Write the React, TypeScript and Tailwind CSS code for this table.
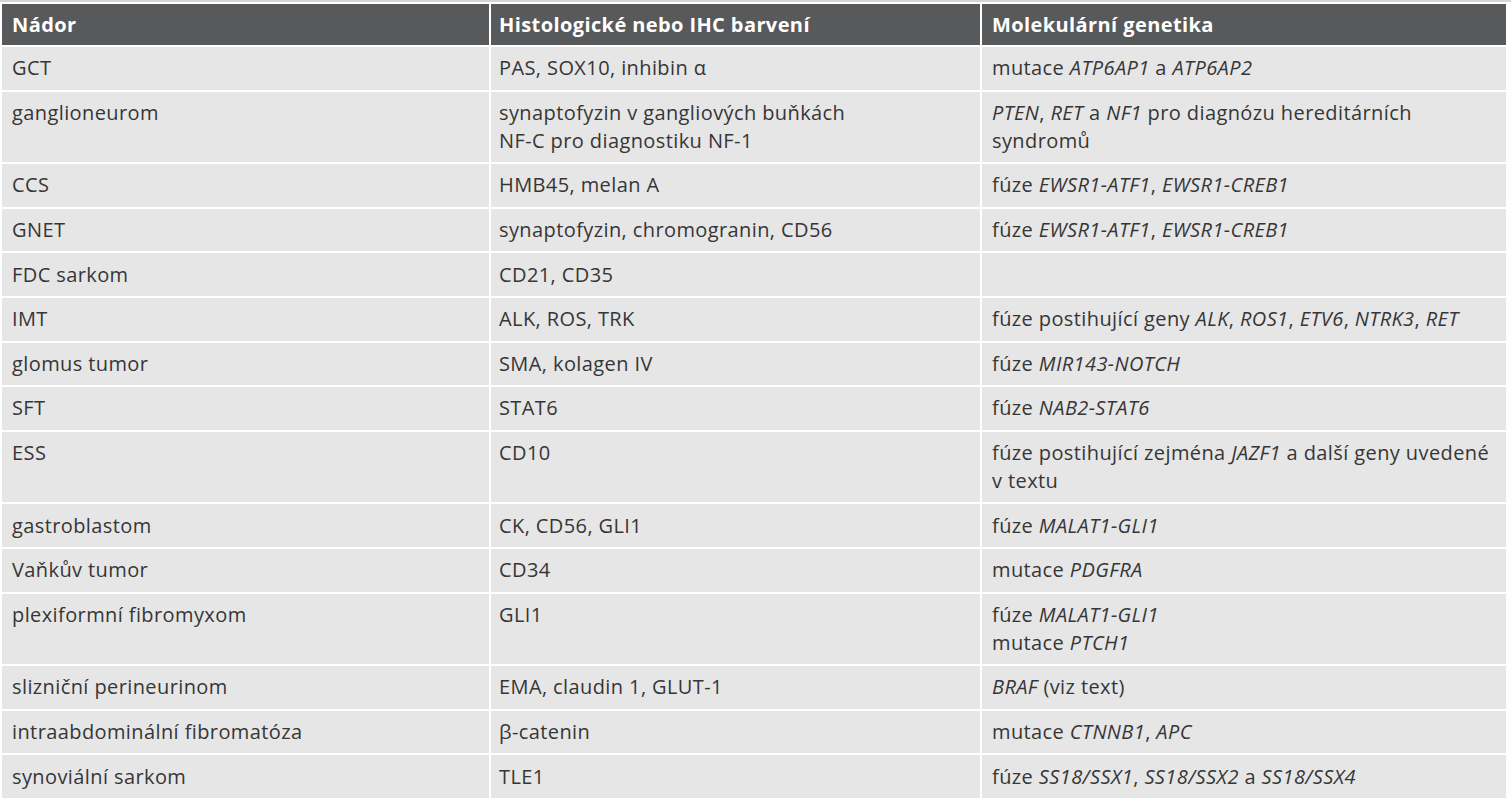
import React from 'react';

type Cell = React.ReactNode;

const I = ({ children }: { children: React.ReactNode }) => <em className="italic">{children}</em>;

const rows: [Cell, Cell, Cell][] = [
  ['GCT', 'PAS, SOX10, inhibin α', <>mutace <I>ATP6AP1</I> a <I>ATP6AP2</I></>],
  [
    'ganglioneurom',
    <>synaptofyzin v gangliových buňkách<br />NF-C pro diagnostiku NF-1</>,
    <><I>PTEN</I>, <I>RET</I> a <I>NF1</I> pro diagnózu hereditárních<br />syndromů</>,
  ],
  ['CCS', 'HMB45, melan A', <>fúze <I>EWSR1-ATF1</I>, <I>EWSR1-CREB1</I></>],
  ['GNET', 'synaptofyzin, chromogranin, CD56', <>fúze <I>EWSR1-ATF1</I>, <I>EWSR1-CREB1</I></>],
  ['FDC sarkom', 'CD21, CD35', ''],
  ['IMT', 'ALK, ROS, TRK', <>fúze postihující geny <I>ALK</I>, <I>ROS1</I>, <I>ETV6</I>, <I>NTRK3</I>, <I>RET</I></>],
  ['glomus tumor', 'SMA, kolagen IV', <>fúze <I>MIR143-NOTCH</I></>],
  ['SFT', 'STAT6', <>fúze <I>NAB2-STAT6</I></>],
  ['ESS', 'CD10', <>fúze postihující zejména <I>JAZF1</I> a další geny uvedené<br />v textu</>],
  ['gastroblastom', 'CK, CD56, GLI1', <>fúze <I>MALAT1-GLI1</I></>],
  ['Vaňkův tumor', 'CD34', <>mutace <I>PDGFRA</I></>],
  ['plexiformní fibromyxom', 'GLI1', <>fúze <I>MALAT1-GLI1</I><br />mutace <I>PTCH1</I></>],
  ['slizniční perineurinom', 'EMA, claudin 1, GLUT-1', <><I>BRAF</I> (viz text)</>],
  ['intraabdominální fibromatóza', 'β-catenin', <>mutace <I>CTNNB1</I>, <I>APC</I></>],
  ['synoviální sarkom', 'TLE1', <>fúze <I>SS18/SSX1</I>, <I>SS18/SSX2</I> a <I>SS18/SSX4</I></>],
];

export default function App() {
  return (
    <div className="min-h-screen bg-white border-t-2 border-[#d6d6d6] font-['Open_Sans','Noto_Sans',sans-serif] text-[20px] tracking-[0.4px] text-[#363636]">
      <table className="w-[1508px] border-separate border-spacing-[2px] table-fixed">
        <colgroup>
          <col className="w-[487px]" />
          <col className="w-[489px]" />
          <col className="w-[524px]" />
        </colgroup>
        <thead>
          <tr className="bg-[#58595b] text-white">
            <th className="text-left align-top px-[10px] py-[7px] leading-[27px] font-bold">Nádor</th>
            <th className="text-left align-top px-[8px] py-[7px] leading-[27px] font-bold">Histologické nebo IHC barvení</th>
            <th className="text-left align-top px-[10px] py-[7px] leading-[27px] font-bold">Molekulární genetika</th>
          </tr>
        </thead>
        <tbody>
          {rows.map((r, i) => (
            <tr key={i} className="bg-[#e6e6e7]">
              <td className="align-top px-[10px] py-[7.3px] leading-[28px]">{r[0]}</td>
              <td className="align-top px-[8px] py-[7.3px] leading-[28px]">{r[1]}</td>
              <td className="align-top px-[10px] py-[7.3px] leading-[28px]">{r[2]}</td>
            </tr>
          ))}
        </tbody>
      </table>
    </div>
  );
}
